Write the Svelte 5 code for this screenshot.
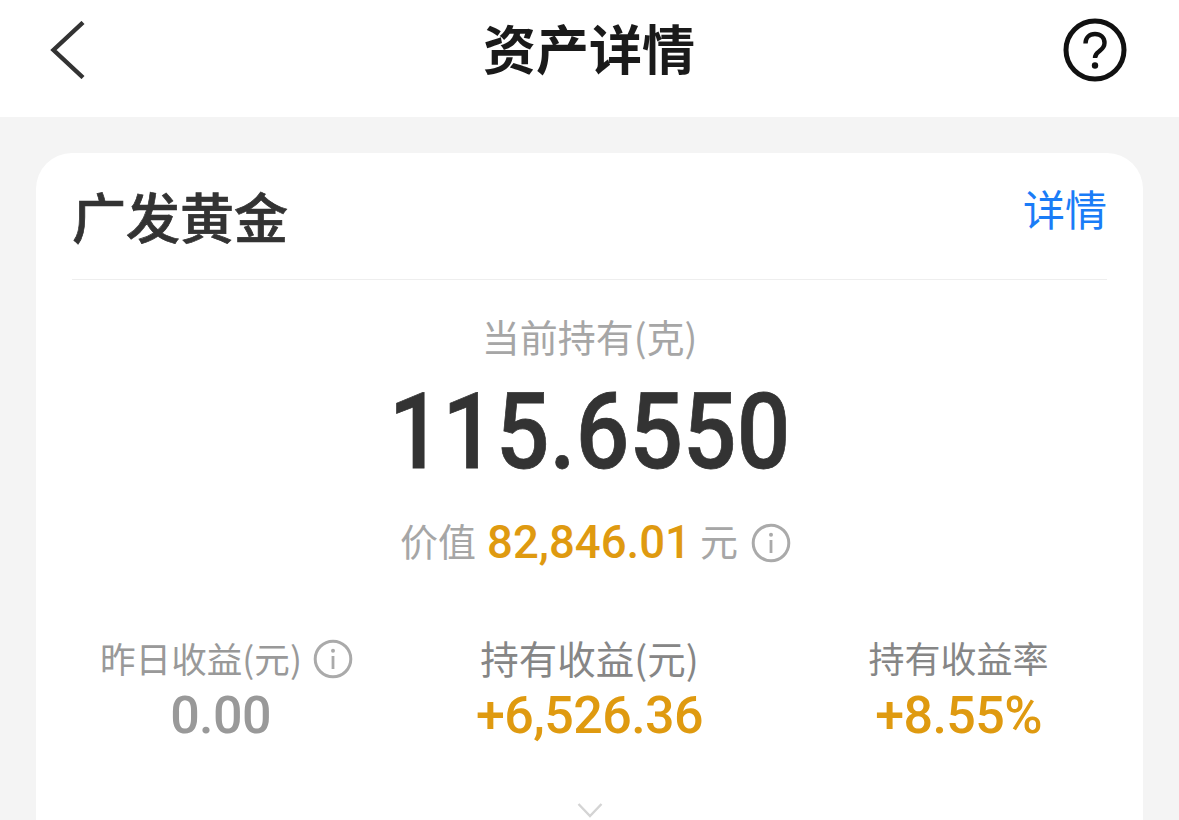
<script>
  const stats = [
    { label: '昨日收益(元)', value: '0.00', tone: 'muted', info: true, kind: 'plain' },
    { label: '持有收益(元)', value: '+6,526.36', tone: 'gold', info: false, kind: 'large' },
    { label: '持有收益率', value: '+8.55%', tone: 'gold', info: false, kind: 'dark' }
  ];
</script>

<div class="page">
  <header class="nav">
    <svg class="back" viewBox="0 0 36 58" width="36" height="58"><path d="M34 1.5 L4.5 29 L34 56.5" fill="none" stroke="#333" stroke-width="4.4"/></svg>
    <h1>资产详情</h1>
    <svg class="help" viewBox="0 0 64 64" width="64" height="64">
      <circle cx="32" cy="32" r="29" fill="none" stroke="#111" stroke-width="5"/>
      <path d="M22.5 25.5 C22.5 19.5 26.5 16 32 16 C37.5 16 41.5 19.5 41.5 25 C41.5 29.5 38.5 31.5 36 33.5 C33.5 35.2 32 36.5 32 40" fill="none" stroke="#111" stroke-width="4.4"/>
      <circle cx="32" cy="47.5" r="3.2" fill="#111"/>
    </svg>
  </header>

  <section class="card">
    <div class="head">
      <h2>广发黄金</h2>
      <span class="link">详情</span>
    </div>
    <div class="hold">
      <div class="hold-label">当前持有(克)</div>
      <div class="hold-num">115.6550</div>
      <div class="worth">
        <span>价值</span>
        <b>82,846.01</b>
        <span class="unit">元</span>
        <svg class="info" viewBox="0 0 40 40" width="40" height="40">
          <circle cx="20" cy="20" r="17.8" fill="none" stroke="#aaa" stroke-width="3"/>
          <rect x="18.6" y="17" width="2.8" height="13" fill="#aaa"/>
          <circle cx="20" cy="11.8" r="2" fill="#aaa"/>
        </svg>
      </div>
    </div>
    <div class="stats">
      {#each stats as s}
        <div class="stat">
          <div class="stat-label {s.kind}">
            <span>{s.label}</span>
            {#if s.info}
              <svg class="info" viewBox="0 0 40 40" width="40" height="40">
                <circle cx="20" cy="20" r="17.8" fill="none" stroke="#aaa" stroke-width="3"/>
                <rect x="18.6" y="17" width="2.8" height="13" fill="#aaa"/>
                <circle cx="20" cy="11.8" r="2" fill="#aaa"/>
              </svg>
            {/if}
          </div>
          <div class="stat-value {s.tone}">{s.value}</div>
        </div>
      {/each}
    </div>
    <div class="more">
      <svg viewBox="0 0 26 16" width="26" height="16"><path d="M1.5 1 L13 13 L24.5 1" fill="none" stroke="#d4d4d4" stroke-width="2.4"/></svg>
    </div>
  </section>
</div>

<style>
  :global(body) {
    margin: 0;
    background: #f4f4f4;
  }
  .page {
    height: 820px;
    overflow: hidden;
    background: #f4f4f4;
    font-family: "Noto Sans CJK SC", "Noto Sans", sans-serif;
  }
  .nav {
    height: 117px;
    background: #fff;
    display: grid;
    grid-template-columns: 1fr auto 1fr;
    align-items: center;
    padding: 0 52px 23px 49px;
    box-sizing: border-box;
  }
  .help {
    justify-self: end;
    margin-top: 6px;
  }
  .back {
    margin-top: 6px;
  }
  .back, .help {
    display: block;
  }
  h1 {
    margin: 0;
    font-size: 53px;
    line-height: 1;
    font-weight: 700;
    color: #1a1a1a;
    transform: translateX(1px);
  }
  .card {
    margin: 36px 36px 0;
    padding: 0 36px;
    background: #fff;
    border-radius: 36px;
    height: 800px;
  }
  .head {
    height: 127px;
    display: flex;
    justify-content: space-between;
    border-bottom: 1px solid #eee;
    box-sizing: border-box;
  }
  h2 {
    margin: 33px 0 0;
    font-size: 54px;
    line-height: 60px;
    font-weight: 500;
    -webkit-text-stroke: 0.7px #333;
    color: #333;
  }
  .link {
    margin-top: 25px;
    font-size: 42px;
    line-height: 60px;
    color: #1a7cf7;
  }
  .hold {
    text-align: center;
  }
  .hold-label {
    margin-top: 30px;
    font-size: 38px;
    line-height: 52px;
    color: #a6a6a6;
  }
  .hold-num {
    margin-top: 12px;
    font-family: Roboto, sans-serif;
    font-weight: 500;
    font-size: 106px;
    line-height: 116px;
    transform: scaleX(0.89);
    -webkit-text-stroke: 0.8px #333;
    color: #333;
  }
  .worth {
    margin-top: 27px;
    display: flex;
    justify-content: center;
    align-items: center;
    gap: 11px;
    height: 52px;
    padding-left: 12px;
    font-size: 38px;
    color: #a6a6a6;
  }
  .worth span {
    margin-top: -8px;
  }
  .worth .unit {
    margin-left: -2px;
    margin-right: 2px;
  }
  .worth b {
    margin-top: -2px;
    font-family: Roboto, sans-serif;
    font-weight: 500;
    font-size: 45.5px;
    color: #df9a10;
  }
  .worth .info {
    margin-top: 0;
  }
  .info {
    display: block;
  }
  .stats {
    margin: 62px -36px 0;
    display: grid;
    grid-template-columns: repeat(3, 1fr);
    text-align: center;
  }
  .stat-label {
    display: flex;
    justify-content: center;
    align-items: center;
    gap: 11px;
    height: 52px;
    font-size: 36px;
    color: #868686;
  }
  .stat-label .info {
    margin-top: 4px;
  }
  .stat-label.plain {
    font-size: 35.6px;
    color: #999;
    padding-left: 12px;
  }
  .stat-label.large {
    font-size: 38.5px;
  }
  .stat-value {
    margin-top: 3px;
    font-family: Roboto, sans-serif;
    font-weight: 500;
    font-size: 52px;
    line-height: 60px;
    letter-spacing: -0.6px;
  }
  .muted { color: #999; }
  .gold { color: #df9a10; }
  .more {
    margin-top: 57px;
    display: flex;
    justify-content: center;
  }
  .more svg { display: block; }
</style>
